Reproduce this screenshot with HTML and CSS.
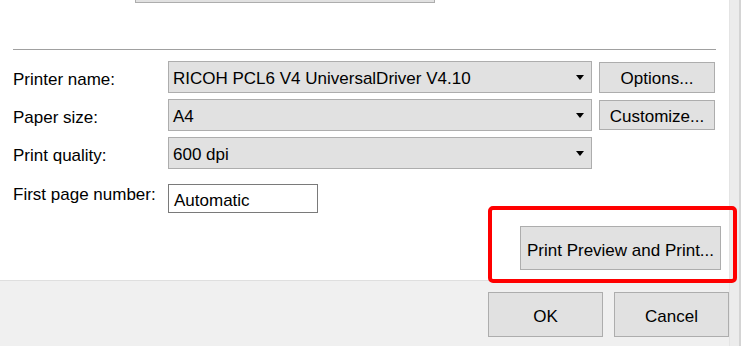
FILE: index.html
```html
<!DOCTYPE html>
<html lang="en">
<head>
  <meta charset="UTF-8">
  <title>Print Setup</title>
  <link rel="stylesheet" href="styles.css">
</head>
<body>
  <div class="window">
    <div class="main">

      <div class="content">
        <div class="stub"></div>
        <div class="separator"></div>

        <div class="form">
          <label class="label">Printer name:</label>
          <div class="combo">
            <span>RICOH PCL6 V4 UniversalDriver V4.10</span>
            <span class="arrow"></span>
          </div>
          <button class="btn side">Options...</button>

          <label class="label">Paper size:</label>
          <div class="combo">
            <span>A4</span>
            <span class="arrow"></span>
          </div>
          <button class="btn side short">Customize...</button>

          <label class="label">Print quality:</label>
          <div class="combo">
            <span>600 dpi</span>
            <span class="arrow"></span>
          </div>
          <div></div>
        </div>

        <div class="first-page">
          <label class="label">First page number:</label>
          <div class="textbox">Automatic</div>
        </div>

        <div class="preview-row">
          <button class="btn preview">Print Preview and Print...</button>
        </div>

        <!-- highlight drawn over the dialog -->
        <div class="highlight"></div>
      </div>

      <div class="footer">
        <button class="btn big">OK</button>
        <button class="btn big">Cancel</button>
      </div>
    </div>

    <div class="strip"></div>
  </div>
</body>
</html>
```

FILE: styles.css
```css
* {
  box-sizing: border-box;
}

body {
  margin: 0;
  width: 741px;
  height: 346px;
  overflow: hidden;
  background: #fff;
  font-family: 'Liberation Sans', Arial, sans-serif;
  font-size: 17px;
  color: #000;
}

.window {
  display: flex;
  height: 346px;
}

.main {
  width: 729px;
  display: flex;
  flex-direction: column;
}

.content {
  position: relative;
  height: 280px;
  padding-left: 13px;
}

.stub {
  margin-left: 122px;
  width: 300px;
  height: 3px;
  background: #e1e1e1;
  border: 1px solid #adadad;
  border-top: none;
}

.separator {
  margin-top: 46px;
  width: 703px;
  height: 1px;
  background: #a0a0a0;
}

.form {
  margin-top: 11px;
  display: grid;
  grid-template-columns: 148px 424px 116px;
  grid-auto-rows: 32px;
  column-gap: 7px;
  row-gap: 6px;
  align-items: center;
}

.label {
  line-height: 20px;
  padding-top: 5px;
}

.combo {
  height: 32px;
  background: #e1e1e1;
  border: 1px solid #adadad;
  display: flex;
  align-items: center;
  justify-content: space-between;
  padding: 3px 7px 0 4px;
}

.arrow {
  width: 0;
  height: 0;
  border-left: 4px solid transparent;
  border-right: 4px solid transparent;
  border-top: 5px solid #000;
  margin-top: -3px;
}

.btn {
  font-family: inherit;
  font-size: 17px;
  color: #000;
  background: #e1e1e1;
  border: 1px solid #adadad;
  padding: 3px 0 0;
  cursor: pointer;
}

.side {
  height: 31px;
  align-self: start;
  margin-top: 1px;
}

.short {
  height: 30px;
}

.first-page {
  margin-top: 15px;
  display: flex;
  align-items: flex-start;
}

.first-page .label {
  width: 155px;
  padding-top: 0;
  margin-top: 1px;
}

.textbox {
  width: 150px;
  height: 29px;
  border: 1px solid #7a7a7a;
  background: #fff;
  padding: 5px 5px 0;
  line-height: 22px;
}

.preview-row {
  margin-top: 13px;
  padding-left: 507px;
}

.preview {
  width: 201px;
  height: 44px;
  padding-top: 5px;
}

.highlight {
  position: absolute;
  left: 488px;
  top: 206px;
  width: 249px;
  height: 77px;
  border: 4px solid #ff0000;
  border-radius: 5px;
}

.footer {
  height: 66px;
  background: #f0f0f0;
  border-top: 1px solid #dfdfdf;
  display: flex;
  gap: 11px;
  padding: 11px 0 0 488px;
}

.big {
  width: 116px;
  height: 45px;
  padding-top: 4px;
}

.strip {
  width: 12px;
  background: #ececec;
  border-right: 2px solid #d4d4d4;
  border-left: 1px solid #e4e4e4;
}
```
